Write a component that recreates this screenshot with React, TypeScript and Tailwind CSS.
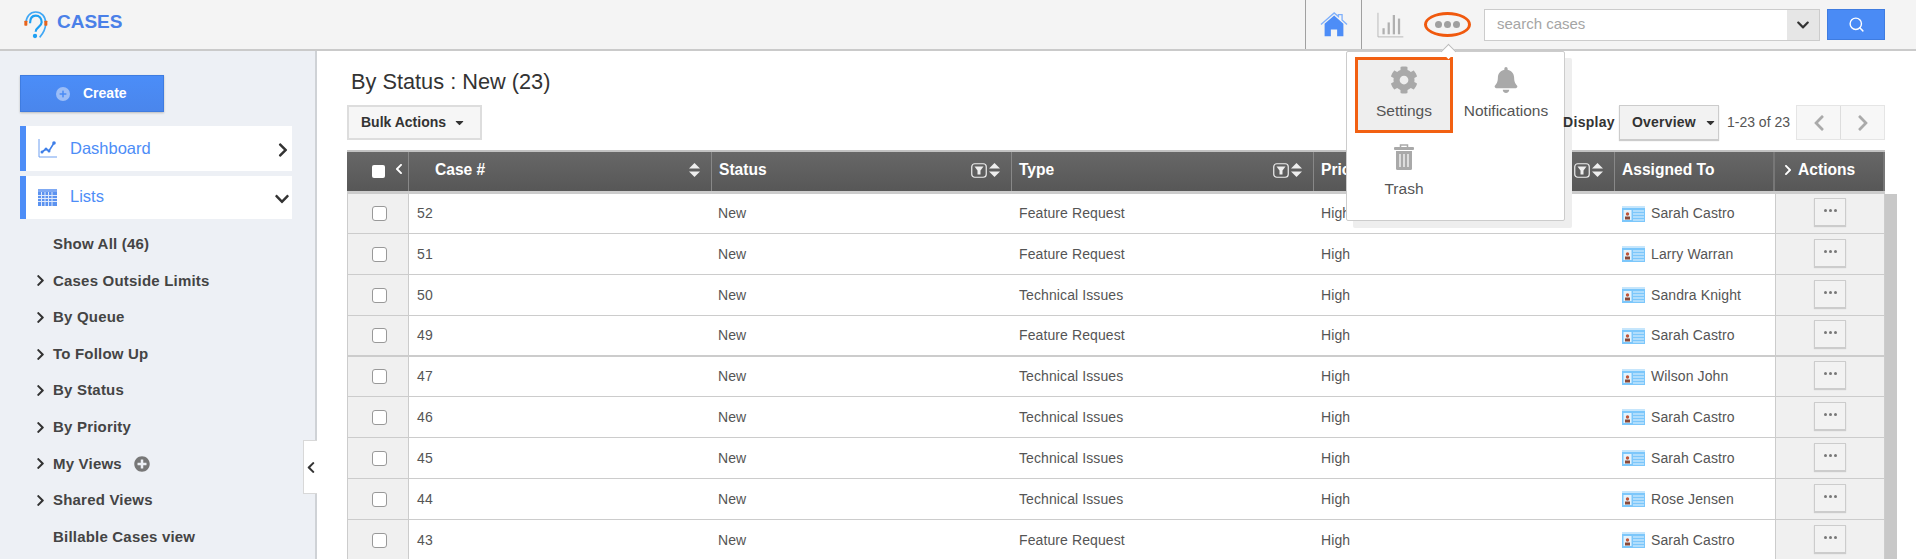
import { FaBell, FaCaretDown, FaChevronDown, FaChevronLeft, FaChevronRight, FaCog, FaPlus, FaPlusCircle } from "react-icons/fa";
import { Search } from "lucide-react";

const cases = [
  { id: 52, type: "Feature Request", owner: "Sarah Castro", h: "h-[40px]" },
  { id: 51, type: "Feature Request", owner: "Larry Warran", h: "h-[41px]" },
  { id: 50, type: "Technical Issues", owner: "Sandra Knight", h: "h-[41px]" },
  { id: 49, type: "Feature Request", owner: "Sarah Castro", h: "h-[41px]" },
  { id: 47, type: "Technical Issues", owner: "Wilson John", h: "h-[40px]" },
  { id: 46, type: "Technical Issues", owner: "Sarah Castro", h: "h-[41px]" },
  { id: 45, type: "Technical Issues", owner: "Sarah Castro", h: "h-[41px]" },
  { id: 44, type: "Technical Issues", owner: "Rose Jensen", h: "h-[41px]" },
  { id: 43, type: "Feature Request", owner: "Sarah Castro", h: "h-[41px]" },
];

const tree = [
  { label: "Show All (46)" },
  { label: "Cases Outside Limits", arrow: true },
  { label: "By Queue", arrow: true },
  { label: "To Follow Up", arrow: true },
  { label: "By Status", arrow: true },
  { label: "By Priority", arrow: true },
  { label: "My Views", arrow: true, add: true },
  { label: "Shared Views", arrow: true },
  { label: "Billable Cases view" },
];

const grid = "grid grid-cols-[62px_303px_300px_302px_301px_160px_110px]";

function Logo() {
  return (
    <svg width="28" height="30" viewBox="21 15 84 90" fill="none">
      <path d="M33 55C33 35 45 21 62 21C80 21 92 35 92 55C92 72 85 85 74 97" stroke="#3fa7f5" strokeWidth="5" />
      <path d="M45 55C45 40 52 32 62 32C73 32 80 40 80 52C80 65 62 66 62 80" stroke="#1e9ff2" strokeWidth="6.5" />
      <circle cx="60" cy="93" r="6.5" fill="#1e9ff2" />
      <rect x="28" y="47" width="9" height="15" rx="2" fill="#e8641b" />
      <rect x="88" y="47" width="9" height="15" rx="2" fill="#e8641b" />
    </svg>
  );
}

function HomeIcon() {
  return (
    <svg width="28" height="27" viewBox="30 30 85 80">
      <path d="M33 70L73 35L86 46V40H97V56L112 70" fill="none" stroke="#7fb0fb" strokeWidth="4" />
      <path d="M73 43L101 68V106H82V85H63V106H44V68Z" fill="#4d8df7" />
    </svg>
  );
}

function ChartIcon() {
  return (
    <svg width="27" height="26" viewBox="200 28 84 80">
      <path d="M203 30V105H282" fill="none" stroke="#b8b8b8" strokeWidth="3" />
      <rect x="217" y="78" width="7" height="19" fill="#b0b0b0" />
      <rect x="233" y="60" width="7" height="37" fill="#b0b0b0" />
      <rect x="249" y="37" width="7" height="60" fill="#b0b0b0" />
      <rect x="265" y="48" width="7" height="49" fill="#b0b0b0" />
    </svg>
  );
}

function DashIcon() {
  return (
    <svg width="19" height="19" viewBox="0 0 19 19" fill="none">
      <path d="M1 0V18H19" stroke="#6f9ff0" strokeWidth="1" />
      <path d="M4 13L8 10L11 12L16 4" stroke="#3f7fe8" strokeWidth="1.6" />
      <circle cx="4" cy="13" r="1.5" fill="#3f7fe8" />
      <circle cx="8" cy="10" r="1.5" fill="#3f7fe8" />
      <circle cx="11" cy="12" r="1.5" fill="#3f7fe8" />
      <circle cx="16" cy="4" r="1.8" fill="#3f7fe8" />
    </svg>
  );
}

function GridIcon() {
  return (
    <svg width="19" height="17" viewBox="0 0 19 17">
      <rect width="19" height="17" fill="#5b92f0" />
      <rect width="19" height="3" fill="#7fa9f3" />
      <path d="M0 6.5H19M0 9.5H19M0 12.5H19M3.5 3V17M7 3V17M10.5 3V17M14 3V17" stroke="#dfe9fb" strokeWidth="1" />
    </svg>
  );
}

function TrashIcon() {
  return (
    <svg width="20" height="26" viewBox="0 0 20 26">
      <path d="M6.5 3V1H13.5V3" fill="none" stroke="#a9a9a9" strokeWidth="1.5" />
      <rect y="3" width="20" height="3" rx="1" fill="#a9a9a9" />
      <path d="M2 7H18V24.5Q18 26 16.5 26H3.500Q2 26 2 24.5Z" fill="#a9a9a9" />
      <path d="M6 10V23M10 10V23M14 10V23" stroke="#fff" strokeWidth="1.2" />
    </svg>
  );
}

function SortIcon() {
  return (
    <svg width="11" height="14" viewBox="0 0 11 14" fill="#eee" className="shrink-0">
      <path d="M5.500 0L11 5.500H0Z" />
      <path d="M5.500 14L11 8.500H0Z" />
    </svg>
  );
}

function FilterIcon() {
  return (
    <svg width="16" height="15" viewBox="0 0 16 15" fill="none" className="shrink-0">
      <rect x="0.750" y="0.750" width="14.500" height="13.500" rx="3" stroke="#eee" strokeWidth="1.200" />
      <path d="M3.500 3.500H12.500L9.500 7.500V11.500H6.500V7.500Z" fill="#eee" />
    </svg>
  );
}

function CardIcon() {
  return (
    <svg width="23" height="16" viewBox="0 0 23 16" className="shrink-0">
      <rect width="23" height="16" fill="#7cc7fb" />
      <rect y="0" width="23" height="2" fill="#c6e6fc" />
      <rect x="1.500" y="4" width="8" height="10" fill="#e4f3fd" />
      <circle cx="5.500" cy="8" r="1.700" fill="#c0553a" />
      <rect x="3" y="10.500" width="5" height="3" fill="#8a4a3a" />
      <path d="M11 5H22M11 8H22M11 11H22M11 14H22" stroke="#e4f3fd" strokeWidth="1" />
    </svg>
  );
}

function Dots() {
  return (
    <span className="flex items-center gap-[2px]">
      <span className="h-[3px] w-[3px] rounded-full bg-[#777]" />
      <span className="h-[3px] w-[3px] rounded-full bg-[#777]" />
      <span className="h-[3px] w-[3px] rounded-full bg-[#777]" />
    </span>
  );
}

function HeadCell({ label, pad, filter, sort }: { label: string; pad: string; filter?: boolean; sort?: boolean }) {
  return (
    <div className={`flex h-full items-center overflow-hidden border-r border-[#888] pb-[3px] pr-[11px] ${pad}`}>
      <span>{label}</span>
      <span className="ml-auto flex items-center gap-[2px]">
        {filter ? <FilterIcon /> : null}
        {sort ? <SortIcon /> : null}
      </span>
    </div>
  );
}

export default function App() {
  return (
    <div className="relative flex h-[559px] flex-col overflow-hidden bg-white font-['Liberation_Sans',Arial,sans-serif] text-[14px] text-[#555]">
      <header className="flex h-[51px] shrink-0 items-stretch border-b-2 border-[#cacaca] bg-[#f4f4f4] pr-[31px]">
        <div className="flex items-center pl-[22px]">
          <Logo />
          <span className="ml-[7px] mt-[-5px] text-[19px] font-bold text-[#4a80e8]">CASES</span>
        </div>
        <div className="ml-auto flex w-[57px] items-center justify-center border-x border-[#a0a0a0]">
          <HomeIcon />
        </div>
        <div className="ml-[15px] flex items-center">
          <ChartIcon />
        </div>
        <div className="ml-[20px] flex items-center">
          <div className="flex h-[25px] w-[47px] items-center justify-center rounded-[50%] border-[3px] border-[#f0590e]">
            <span className="flex items-center gap-[2px]">
              <span className="h-[7px] w-[7px] rounded-full bg-[#a0a0a0]" />
              <span className="h-[7px] w-[7px] rounded-full bg-[#a0a0a0]" />
              <span className="h-[7px] w-[7px] rounded-full bg-[#a0a0a0]" />
            </span>
          </div>
        </div>
        <div className="ml-[13px] flex items-center">
          <div className="flex h-[32px] w-[336px] items-stretch border border-[#ccc] bg-white">
            <div className="flex flex-1 items-center pl-[12px] text-[15px] text-[#a5a5a5]">search cases</div>
            <div className="flex w-[32px] items-center justify-center bg-[#e6e6e6] text-[#333]">
              <FaChevronDown size={14} />
            </div>
          </div>
        </div>
        <div className="ml-[7px] flex items-center">
          <div className="flex h-[31px] w-[58px] items-center justify-center border border-[#3f7ce0] bg-[#4a8bf5] text-white">
            <Search size={17} strokeWidth={2} />
          </div>
        </div>
      </header>

      <div className="flex min-h-0 flex-1">
        <aside className="relative w-[317px] shrink-0 border-r-2 border-[#cfd2d6] bg-[#edf0f5] pl-[20px]">
          <div className="mt-[24px] flex h-[37px] w-[144px] items-center border border-[#3f7ce0] bg-gradient-to-b from-[#4b8df8] to-[#4a86ec] pl-[35px] text-[14px] font-bold text-white shadow-[0_1px_2px_#bbb]">
            <span className="mr-[13px] flex h-[14px] w-[14px] items-center justify-center rounded-full bg-[#9bbdf7] text-[#4a8bf5]">
              <FaPlus size={8} />
            </span>
            Create
          </div>

          <div className="mt-[14px] flex h-[45px] w-[272px] items-center border-l-[6px] border-[#4d8df7] bg-white pl-[12px] pr-[1px] text-[16.5px] text-[#4d8df7]">
            <DashIcon />
            <span className="ml-[13px] mt-[-1px]">Dashboard</span>
            <FaChevronRight size={16} className="ml-auto mt-[3px] text-[#333]" />
          </div>
          <div className="mt-[5px] flex h-[43px] w-[272px] items-center border-l-[6px] border-[#4d8df7] bg-white pl-[12px] pr-[2px] text-[16.5px] text-[#4d8df7]">
            <GridIcon />
            <span className="ml-[13px] mt-[-3px]">Lists</span>
            <FaChevronDown size={16} className="ml-auto mt-[3px] text-[#333]" />
          </div>

          <ul className="mt-[7px] text-[15px] font-bold tracking-[0.2px] text-[#444]">
            {tree.map((item) => (
              <li key={item.label} className="relative flex h-[36.6px] items-center pl-[33px]">
                {item.arrow ? <FaChevronRight size={13} className="absolute left-[14px] text-[#333]" /> : null}
                {item.label}
                {item.add ? <FaPlusCircle size={16} className="ml-[12px] text-[#777]" /> : null}
              </li>
            ))}
          </ul>

          <div className="absolute left-[303px] top-[389px] flex h-[54px] w-[14px] items-center border border-r-0 border-[#d8d8d8] bg-white pl-[1px] text-[#333]">
            <FaChevronLeft size={13} />
          </div>
        </aside>

        <main className="min-w-0 flex-1 pl-[30px]">
          <h1 className="pl-[4px] pt-[17px] text-[21.75px] leading-[28px] text-[#333]">By Status : New (23)</h1>
          <div className="mt-[9px] flex h-[35px] w-[1538px] items-center">
            <div className="flex h-[35px] w-[135px] items-center border-2 border-[#ddd] bg-[#f6f6f6] pl-[12px] font-bold text-[#333]">
              Bulk Actions
              <FaCaretDown size={13} className="ml-[7px]" />
            </div>
            <span className="relative z-10 ml-auto font-bold tracking-[0.3px] text-[#333]">Display</span>
            <div className="ml-[4px] mr-[1px] flex h-[35px] w-[100px] items-center border border-[#ccc] bg-[#f2f2f2] pl-[12px] font-bold tracking-[0.2px] text-[#333] shadow-[0_1px_1px_#ccc]">
              Overview
              <FaCaretDown size={13} className="ml-[8px]" />
            </div>
            <span className="ml-[7px] text-[14px] text-[#555]">1-23 of 23</span>
            <div className="ml-[6px] flex h-[35px] w-[89px] items-stretch border border-[#e5e5e5] bg-[#f7f7f7] text-[#aaa]">
              <div className="flex flex-1 items-center justify-center border-r border-[#ddd]">
                <FaChevronLeft size={18} />
              </div>
              <div className="flex flex-1 items-center justify-center">
                <FaChevronRight size={18} />
              </div>
            </div>
          </div>

          <div className={`mt-[10px] h-[44px] w-[1538px] border-t-2 border-b-[3px] border-t-[#c2c2c2] border-b-[#ccc] bg-gradient-to-b from-[#676767] to-[#575757] text-[15.6px] font-bold text-white ${grid}`}>
            <div className="flex h-full items-center border-r border-[#888] pl-[25px]">
              <span className="h-[13px] w-[13px] rounded-[2px] bg-white" />
              <FaChevronLeft size={12} className="ml-[8px] mt-[-6px]" />
            </div>
            <HeadCell label="Case #" pad="pl-[26px]" sort />
            <HeadCell label="Status" pad="pl-[7px]" filter sort />
            <HeadCell label="Type" pad="pl-[7px]" filter sort />
            <HeadCell label="Priority" pad="pl-[7px]" filter sort />
            <div className="flex h-full items-center border-r-2 border-[#777] pb-[3px] pl-[7px]">Assigned To</div>
            <div className="flex h-full items-center border-r-2 border-[#777] pb-[3px] pl-[7px]">
              <FaChevronRight size={12} className="mr-[4px]" />
              Actions
            </div>
          </div>

          <div className="flex w-[1550px]">
            <div className="w-[1538px] shrink-0 tracking-[0.1px]">
              {cases.map((c) => (
                <div key={c.id} className={`${grid} ${c.h} border-b border-[#ccc] ${c.id === 49 ? "border-b-2" : ""}`}>
                  <div className="flex items-center border-x border-[#ccc] bg-[#f0f0f0] pl-[24px]">
                    <span className="h-[15px] w-[15px] rounded-[3px] border border-[#999] bg-white" />
                  </div>
                  <div className="flex items-center pl-[8px]">{c.id}</div>
                  <div className="flex items-center pl-[6px]">New</div>
                  <div className="flex items-center pl-[7px]">{c.type}</div>
                  <div className="flex items-center pl-[7px]">High</div>
                  <div className="flex items-center gap-[6px] pl-[7px]">
                    <CardIcon />
                    {c.owner}
                  </div>
                  <div className="flex items-center justify-center border-x border-[#ccc] bg-[#f0f0f0]">
                    <div className="mb-[3px] flex h-[28px] w-[32px] items-center justify-center border border-[#ccc] bg-[#f2f2f2] pb-[3px] shadow-[0_1px_1px_#ccc]">
                      <Dots />
                    </div>
                  </div>
                </div>
              ))}
            </div>
            <div className="w-[12px] shrink-0 bg-[#c8c8c8]" />
          </div>
        </main>
      </div>

      <div className="absolute left-[1346px] top-[51px] h-[170px] w-[219px] rounded-[2px] border border-[#ccc] bg-white text-[15.5px] text-[#555] shadow-[7px_7px_0_#eee]">
        <span className="absolute left-[96px] top-[-6px] h-[11px] w-[11px] rotate-45 border-l border-t border-[#bbb] bg-white" />
        <div className="grid grid-cols-[98px_106px] pl-[8px] pt-[5px]">
          <div className="flex h-[76px] flex-col items-center border-[3px] border-[#f26012] bg-[#eee] pt-[6px]">
            <FaCog size={28} className="text-[#a9a9a9]" />
            <span className="mt-[5px]">Settings</span>
          </div>
          <div className="flex h-[76px] flex-col items-center pt-[10px]">
            <FaBell size={26} className="text-[#a9a9a9]" />
            <span className="mt-[6px]">Notifications</span>
          </div>
          <div className="mt-[6px] flex h-[76px] flex-col items-center pt-[5px]">
            <TrashIcon />
            <span className="mt-[7px]">Trash</span>
          </div>
        </div>
      </div>
    </div>
  );
}
